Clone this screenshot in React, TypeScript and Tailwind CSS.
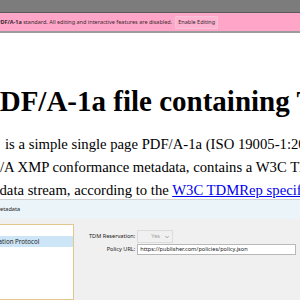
import { ChevronDown } from "lucide-react";

const ui = { fontFamily: '"Noto Sans", "Open Sans", sans-serif' };
const serif = { fontFamily: '"Liberation Serif", "Times New Roman", serif' };

function Banner() {
  return (
    <div className="flex flex-col">
      <div className="h-[12px] bg-[#7c7c7c]" />
      <div className="h-px bg-[#5a5a5a]" />
      <div
        className="flex h-[18px] items-center gap-[3px] whitespace-nowrap bg-[#ffa6c8] text-[5.5px] text-[#3a2a30]"
        style={ui}
      >
        <span className="ml-[-3px]">
          <b>PDF/A-1a</b> standard. All editing and interactive features are disabled.
        </span>
        <span className="flex h-[13px] items-center rounded-[1px] border border-[#f3c4d6] bg-[#ffb3d0] px-[2px]">
          Enable Editing
        </span>
      </div>
      <div className="h-[2px] bg-[#9c9c9c]" />
    </div>
  );
}

function Document() {
  return (
    <div className="whitespace-nowrap text-black" style={serif}>
      <h1 className="ml-[-18px] mt-[50px] text-[29px] font-bold leading-[36px]">
        PDF/A-1a file containing TDM metadata
      </h1>
      <div className="mt-[14px] h-[66px] text-[14.7px] leading-[23px]">
        <p className="pl-[5px]">is a simple single page PDF/A-1a (ISO 19005-1:2005)</p>
        <p>/A XMP conformance metadata, contains a W3C TDM</p>
        <p className="ml-[-7px]">
          adata stream, according to the{" "}
          <span className="text-[#0000ee] underline">W3C TDMRep specification</span>
        </p>
      </div>
    </div>
  );
}

function MetadataDialog() {
  return (
    <div className="relative flex flex-1 flex-col border-t border-[#d2d2d2] text-[5.6px] text-[#222]" style={ui}>
      <div className="flex h-[19px] items-center bg-[#ebf4f8]">
        <span className="ml-[-5px]">Metadata</span>
      </div>
      <div className="flex flex-1 gap-[15px] bg-[#f0f0f0] pt-[5px]">
        <div className="ml-[-4px] w-[78px] shrink-0 overflow-hidden border border-[#e2c88f] bg-white pt-[11px]">
          <div className="ml-[-33px] flex h-[11px] items-center whitespace-nowrap bg-[#cde6f7] text-[6.2px]">
            Sign Registration Protocol
          </div>
        </div>
        <div className="grid grid-cols-[auto_1fr] content-start items-center gap-x-[2px] gap-y-px whitespace-nowrap pr-[4px] pt-[6px]">
          <span className="text-right">TDM Reservation:</span>
          <div className="flex h-[13px] w-[36px] items-center justify-between border border-[#dcdcdc] bg-[#f0f0f0] pl-[13px] pr-[2px] text-[#a0a0a0]">
            <span>Yes</span>
            <ChevronDown size={6} strokeWidth={2} className="text-[#555]" />
          </div>
          <span className="text-right">Policy URL:</span>
          <div className="flex h-[11px] w-[159px] items-center border border-[#b8b8b8] bg-white pl-[2px]">
            https://publisher.com/policies/policy.json
          </div>
        </div>
      </div>
    </div>
  );
}

export default function App() {
  return (
    <div className="flex h-[300px] w-[300px] flex-col overflow-hidden bg-white">
      <Banner />
      <Document />
      <div className="flex flex-1 flex-col">
        <MetadataDialog />
      </div>
    </div>
  );
}
